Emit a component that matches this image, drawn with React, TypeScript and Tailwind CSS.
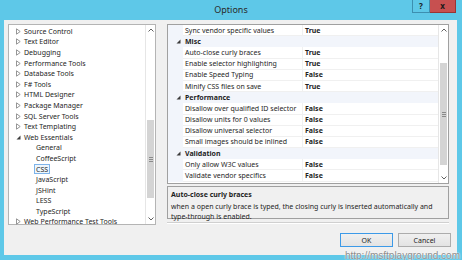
import React from 'react'

type TreeItem = { label: string; level: 0 | 1; arrow?: 'closed' | 'open'; selected?: boolean }

const treeItems: TreeItem[] = [
  { label: 'Source Control', level: 0, arrow: 'closed' },
  { label: 'Text Editor', level: 0, arrow: 'closed' },
  { label: 'Debugging', level: 0, arrow: 'closed' },
  { label: 'Performance Tools', level: 0, arrow: 'closed' },
  { label: 'Database Tools', level: 0, arrow: 'closed' },
  { label: 'F# Tools', level: 0, arrow: 'closed' },
  { label: 'HTML Designer', level: 0, arrow: 'closed' },
  { label: 'Package Manager', level: 0, arrow: 'closed' },
  { label: 'SQL Server Tools', level: 0, arrow: 'closed' },
  { label: 'Text Templating', level: 0, arrow: 'closed' },
  { label: 'Web Essentials', level: 0, arrow: 'open' },
  { label: 'General', level: 1 },
  { label: 'CoffeeScript', level: 1 },
  { label: 'CSS', level: 1, selected: true },
  { label: 'JavaScript', level: 1 },
  { label: 'JSHint', level: 1 },
  { label: 'LESS', level: 1 },
  { label: 'TypeScript', level: 1 },
  { label: 'Web Performance Test Tools', level: 0, arrow: 'closed' },
]

type GridRow = { category: string } | { name: string; value: string }

const gridRows: GridRow[] = [
  { name: 'Sync vendor specific values', value: 'True' },
  { category: 'Misc' },
  { name: 'Auto-close curly braces', value: 'True' },
  { name: 'Enable selector highlighting', value: 'True' },
  { name: 'Enable Speed Typing', value: 'False' },
  { name: 'Minify CSS files on save', value: 'True' },
  { category: 'Performance' },
  { name: 'Disallow over qualified ID selector', value: 'False' },
  { name: 'Disallow units for 0 values', value: 'False' },
  { name: 'Disallow universal selector', value: 'False' },
  { name: 'Small images should be inlined', value: 'False' },
  { category: 'Validation' },
  { name: 'Only allow W3C values', value: 'False' },
  { name: 'Validate vendor specifics', value: 'False' },
]

function ClosedArrow() {
  return (
    <svg width="5" height="7" viewBox="0 0 5 7" className="shrink-0">
      <path d="M0.5 0.8 L4.2 3.5 L0.5 6.2 Z" fill="none" stroke="#8a8a8a" strokeWidth="0.9" />
    </svg>
  )
}

function OpenArrow() {
  return (
    <svg width="5" height="7" viewBox="0 0 5 7" className="shrink-0">
      <path d="M4.5 1.5 L4.5 5.5 L0.5 5.5 Z" fill="#3c3c3c" />
    </svg>
  )
}

function Scrollbar({ thumbTop, thumbHeight }: { thumbTop: number; thumbHeight: number }) {
  return (
    <div className="relative w-[10px] shrink-0 border-l border-[#e6e6e6] bg-white">
      <div className="flex h-[10px] items-center justify-center">
        <svg width="6" height="4" viewBox="0 0 6 4">
          <path d="M0.5 3.5 L3 1 L5.5 3.5" fill="none" stroke="#606060" strokeWidth="1" />
        </svg>
      </div>
      <div
        className="absolute left-[1px] right-[1px] flex items-center justify-center bg-[#d4d4d4]"
        style={{ top: thumbTop, height: thumbHeight }}
      >
        <div className="flex flex-col gap-[1px]">
          <div className="h-px w-[4px] bg-[#8a8a8a]" />
          <div className="h-px w-[4px] bg-[#8a8a8a]" />
          <div className="h-px w-[4px] bg-[#8a8a8a]" />
        </div>
      </div>
      <div className="absolute bottom-0 left-0 right-0 flex h-[10px] items-center justify-center">
        <svg width="6" height="4" viewBox="0 0 6 4">
          <path d="M0.5 0.5 L3 3 L5.5 0.5" fill="none" stroke="#606060" strokeWidth="1" />
        </svg>
      </div>
    </div>
  )
}

export default function App() {
  return (
    <div className="relative flex h-[260px] w-[462px] flex-col overflow-hidden bg-[#5ec8e8] font-['Noto_Sans',sans-serif] text-[7px] leading-none text-[#1e1e1e]">
      {/* title bar */}
      <div className="grid h-[20px] shrink-0 grid-cols-[1fr_auto_1fr]">
        <div />
        <div className="pt-[5px] text-[9px] text-[#2a2a2a]">Options</div>
        <div className="flex items-start justify-end pr-[6px]">
          <div className="flex h-[13px] w-[18px] items-center justify-center border border-t-0 border-[#3d8fb0] bg-[#5ec8e8] text-[8px] font-bold text-[#1a1a1a]">
            ?
          </div>
          <div className="flex h-[13px] w-[26px] items-center justify-center border border-t-0 border-l-0 border-[#9a3434] bg-[#c75050] text-[8px] font-bold text-[#1a1a1a]">
            x
          </div>
        </div>
      </div>

      {/* client area */}
      <div className="mx-[4px] mr-[5px] flex h-[235px] flex-col bg-[#f0f0f0] px-[4px] pt-[4px]">
        <div className="flex h-[201px] gap-[11px]">
          {/* tree */}
          <div className="flex w-[148px] shrink-0 border border-[#b4b4b4] bg-white">
            <div className="flex-1 pt-[1px]">
              {treeItems.map((item) => (
                <div key={item.label} className="flex h-[10.6px] items-center">
                  {item.level === 0 ? (
                    <div className="flex items-center gap-[3px] pl-[7px]">
                      {item.arrow === 'open' ? <OpenArrow /> : <ClosedArrow />}
                      <span>{item.label}</span>
                    </div>
                  ) : (
                    <div className="pl-[25px]">
                      <span
                        className={
                          item.selected
                            ? 'inline-flex h-[10px] items-center border border-[#7eb4ea] bg-[#eef6fd] px-[1px]'
                            : 'inline-flex h-[10px] items-center border border-transparent px-[1px]'
                        }
                      >
                        {item.label}
                      </span>
                    </div>
                  )}
                </div>
              ))}
            </div>
            <Scrollbar thumbTop={95} thumbHeight={78} />
          </div>

          {/* right column */}
          <div className="flex w-[282px] flex-col">
            <div className="flex h-[160px] border border-[#a0a0a0] bg-white">
              <div className="flex-1 overflow-hidden">
                {gridRows.map((row, i) =>
                  'category' in row ? (
                    <div key={i} className="flex h-[11.2px] items-center bg-[#f2f5fb]">
                      <div className="flex w-[15px] justify-end pr-[2px]">
                        <OpenArrow />
                      </div>
                      <span className="pl-[2px] font-bold">{row.category}</span>
                    </div>
                  ) : (
                    <div key={i} className="flex h-[11.2px]">
                      <div className="w-[15px] shrink-0 bg-[#f2f5fb]" />
                      <div className="flex w-[120px] shrink-0 items-center border-b border-r border-[#f0f0f0] pl-[2px]">
                        {row.name}
                      </div>
                      <div className="flex flex-1 items-center border-b border-[#f0f0f0] pl-[2px] font-bold">
                        {row.value}
                      </div>
                    </div>
                  ),
                )}
              </div>
              <Scrollbar thumbTop={38} thumbHeight={102} />
            </div>

            <div className="mt-[2px] h-[33px] border border-[#a0a0a0] bg-[#f0f0f0] px-[3px] pt-[4px]">
              <div className="font-bold">Auto-close curly braces</div>
              <div className="mt-[4px] leading-[10px]">
                when a open curly brace is typed, the closing curly is inserted automatically and
                <br />
                type-through is enabled.
              </div>
            </div>

            <div className="mt-[3px] h-[2px] border-t border-b border-t-[#d0d0d0] border-b-white" />
          </div>
        </div>

        {/* buttons */}
        <div className="mt-[8px] flex justify-end gap-[5px] pr-[2px]">
          <button className="flex h-[14px] w-[53px] items-center justify-center border border-[#3c9ae8] bg-gradient-to-b from-[#f0f0f0] to-[#e3e3e3] text-[7px]">
            OK
          </button>
          <button className="flex h-[14px] w-[53px] items-center justify-center border border-[#acacac] bg-gradient-to-b from-[#f0f0f0] to-[#e3e3e3] text-[7px]">
            Cancel
          </button>
        </div>
      </div>

      {/* watermark */}
      <div className="absolute bottom-[-1px] right-[2px] font-['Liberation_Sans',sans-serif] text-[10px] text-[#8c8c8c] [text-shadow:0_0_2px_#ffffff,0_0_1px_#ffffff]">
        http://msftplayground.com
      </div>
    </div>
  )
}
